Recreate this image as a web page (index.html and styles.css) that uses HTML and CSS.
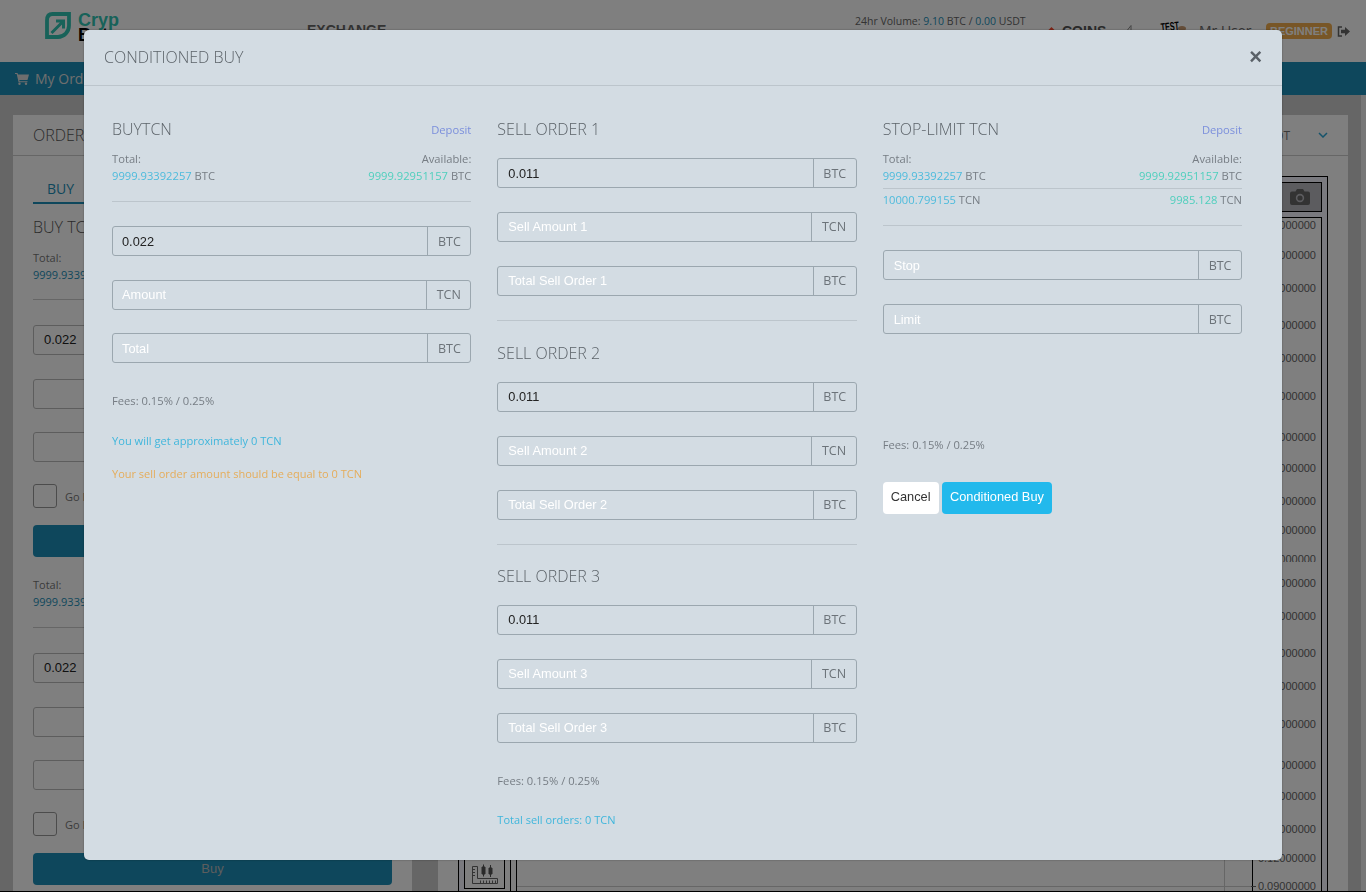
FILE: index.html
```html
<!DOCTYPE html>
<html lang="en">
<head>
<meta charset="utf-8">
<title>Conditioned Buy</title>
<link rel="stylesheet" href="styles.css">
</head>
<body>
<div class="page">
  <header class="top">
    <div class="brand">
      <svg class="logo" width="26" height="27" viewBox="0 0 26 27"><path d="M7.500 2H24v11.600c0 6.400-5 11.200-11 11.400H2V8.500C2 4.500 4 2 7.500 2z" fill="none" stroke="#30c4b3" stroke-width="3.800"/><path d="M6.500 21L17 10.500M11 9h7.500v7.500" fill="none" stroke="#30c4b3" stroke-width="3"/></svg>
      <div class="brand-text"><span class="brand-a">Cryp</span><span class="brand-b">Bot</span></div>
    </div>
    <div class="exchange">EXCHANGE</div>
    <div class="volume">24hr Volume: <b>9.10</b> BTC / <b>0.00</b> USDT</div>
    <div class="coin-dot"></div>
    <div class="coins">COINS</div>
    <svg class="pencil" width="8" height="10" viewBox="0 0 8 10"><path d="M6 .5L1 7h6M6 .5V10" fill="none" stroke="#888" stroke-width="1"/></svg>
    <div class="test">TEST</div>
    <span class="avatar"></span>
    <div class="user">Mr User</div>
    <div class="badge">BEGINNER</div>
    <svg class="signout" width="13" height="11" viewBox="0 0 13 11"><path d="M5 1H1.500v9H5" fill="none" stroke="#666" stroke-width="1.500"/><path d="M4 3.800h4V1l5 4.500L8 10V7.200H4z" fill="#666"/></svg>
  </header>
  <nav class="bar">
    <svg class="cart" width="14" height="13" viewBox="0 0 14 13"><path d="M0 1h2.500l.5 1.500H14l-1.500 5.500H4.300l.3 1.200H12.500v1H3.600L1.700 2H0z" fill="#ddd"/><circle cx="4.500" cy="11.800" r="1.200" fill="#ddd"/><circle cx="11" cy="11.800" r="1.200" fill="#ddd"/></svg>
    <span>My Orders</span>
  </nav>
  <main class="main">
    <section class="orders">
      <h2 class="card-title">ORDERS</h2>
      <div class="orders-body">
        <div class="tab">BUY</div>
        <h3 class="orders-h">BUY TCN</h3>
        <div class="form-block">
          <div class="small">Total:</div>
          <div class="small val-dim">9999.93392257</div>
          <div class="sep"></div>
          <div class="back-input first">0.022</div>
          <div class="back-input"></div>
          <div class="back-input"></div>
          <div class="check-row"><span class="check"></span><span class="go">Go Market</span></div>
          <div class="back-btn">Buy</div>
        </div>
        <div class="form-block">
          <div class="small">Total:</div>
          <div class="small val-dim">9999.93392257</div>
          <div class="sep"></div>
          <div class="back-input first">0.022</div>
          <div class="back-input"></div>
          <div class="back-input"></div>
          <div class="check-row"><span class="check"></span><span class="go">Go Market</span></div>
          <div class="back-btn">Buy</div>
        </div>
      </div>
    </section>
    <section class="chart-card">
      <div class="chart-head"><span class="pair">TCN / USDT</span><svg class="chev" width="10" height="6" viewBox="0 0 10 6"><path d="M1 1l4 4 4-4" fill="none" stroke="#2aa7d6" stroke-width="1.500"/></svg></div>
      <div class="chart-frame">
        <div class="chart-top"><div class="cam"><svg width="20" height="16" viewBox="0 0 20 16"><path d="M7 0h6l1.500 2.500H18a2 2 0 0 1 2 2V14a2 2 0 0 1-2 2H2a2 2 0 0 1-2-2V4.500a2 2 0 0 1 2-2h3.500z" fill="#666"/><circle cx="10" cy="9" r="4.200" fill="#b8b8be"/><circle cx="10" cy="9" r="2.600" fill="#666"/></svg></div></div>
        <div class="chart-row">
          <div class="tools">
            <svg class="tool" width="26" height="20" viewBox="0 0 26 20"><path d="M.5 2.500h5v12h20v5H.5zM.5 5.500h2.500M.5 8.500h2.500M.5 11.500h2.500M8.500 19v-2.500M11.500 19v-2.500M14.500 19v-2.500M17.500 19v-2.500M20.500 19v-2.500M23.500 19v-2.500" fill="none" stroke="#666"/><path d="M10 3h3v7h-3zM17 4h3v6h-3zM11.500 .5v12M18.500 1v12" stroke="#555" fill="#555" stroke-width="1"/></svg>
          </div>
          <div class="strip"></div>
          <div class="plot">
            <div class="grid-v"></div>
            <div class="grid-h"></div>
            <div class="axis">
              <span class="tick" style="top:0px">1.20000000</span>
              <span class="tick" style="top:30px">1.10000000</span>
              <span class="tick" style="top:63px">1.00000000</span>
              <span class="tick" style="top:100px">0.90000000</span>
              <span class="tick" style="top:133px">0.85000000</span>
              <span class="tick" style="top:171px">0.80000000</span>
              <span class="tick" style="top:212px">0.70000000</span>
              <span class="tick" style="top:243px">0.65000000</span>
              <span class="tick" style="top:276px">0.60000000</span>
              <span class="tick" style="top:305px">0.55000000</span>
              <span class="tick clipped" style="top:334px">0.52000000</span>
              <span class="tick" style="top:358px">0.50000000</span>
              <span class="tick" style="top:391px">0.45000000</span>
              <span class="tick" style="top:428px">0.40000000</span>
              <span class="tick" style="top:461px">0.36000000</span>
              <span class="tick" style="top:499px">0.32000000</span>
              <span class="tick" style="top:540px">0.28000000</span>
              <span class="tick" style="top:571px">0.24000000</span>
              <span class="tick" style="top:604px">0.20000000</span>
              <span class="tick" style="top:633px">0.12000000</span>
              <span class="tick" style="top:661px">0.09000000</span>
            </div>
          </div>
        </div>
      </div>
    </section>
    <div class="rail"></div>
    <div class="scroll"></div>
  </main>
  <div class="page-end"></div>
</div>

<div class="backdrop"></div>

<div class="modal">
  <div class="modal-head">
    <h1 class="modal-title">CONDITIONED BUY</h1>
    <span class="close">&times;</span>
  </div>
  <div class="modal-body">
    <div class="col col-buy">
      <div class="col-head"><h4 class="h">BUYTCN</h4><a class="deposit">Deposit</a></div>
      <div class="bal first-bal">
        <div><div>Total:</div><div><span class="v-blue">9999.93392257</span> BTC</div></div>
        <div class="right"><div>Available:</div><div><span class="v-green">9999.92951157</span> BTC</div></div>
      </div>
      <div class="rule rule-a"></div>
      <div class="ig after-rule"><input value="0.022"><span class="addon">BTC</span></div>
      <div class="ig"><input placeholder="Amount"><span class="addon">TCN</span></div>
      <div class="ig"><input placeholder="Total"><span class="addon">BTC</span></div>
      <p class="note fees-a">Fees: 0.15% / 0.25%</p>
      <p class="note info get">You will get approximately 0 TCN</p>
      <p class="note warn">Your sell order amount should be equal to 0 TCN</p>
    </div>

    <div class="col">
      <h4 class="h">SELL ORDER 1</h4>
      <div class="ig head-next"><input value="0.011"><span class="addon">BTC</span></div>
      <div class="ig"><input placeholder="Sell Amount 1"><span class="addon">TCN</span></div>
      <div class="ig"><input placeholder="Total Sell Order 1"><span class="addon">BTC</span></div>
      <div class="rule rule-b"></div>
      <h4 class="h">SELL ORDER 2</h4>
      <div class="ig head-next"><input value="0.011"><span class="addon">BTC</span></div>
      <div class="ig"><input placeholder="Sell Amount 2"><span class="addon">TCN</span></div>
      <div class="ig"><input placeholder="Total Sell Order 2"><span class="addon">BTC</span></div>
      <div class="rule rule-b rule-last"></div>
      <h4 class="h">SELL ORDER 3</h4>
      <div class="ig head-next"><input value="0.011"><span class="addon">BTC</span></div>
      <div class="ig"><input placeholder="Sell Amount 3"><span class="addon">TCN</span></div>
      <div class="ig"><input placeholder="Total Sell Order 3"><span class="addon">BTC</span></div>
      <p class="note fees-b">Fees: 0.15% / 0.25%</p>
      <p class="note info sum">Total sell orders: 0 TCN</p>
    </div>

    <div class="col col-stop">
      <div class="col-head"><h4 class="h">STOP-LIMIT TCN</h4><a class="deposit">Deposit</a></div>
      <div class="bal first-bal">
        <div><div>Total:</div><div><span class="v-blue">9999.93392257</span> BTC</div></div>
        <div class="right"><div>Available:</div><div><span class="v-green">9999.92951157</span> BTC</div></div>
      </div>
      <div class="bal second-bal">
        <div><span class="v-blue">10000.799155</span> TCN</div>
        <div class="right"><span class="v-green">9985.128</span> TCN</div>
      </div>
      <div class="rule rule-c"></div>
      <div class="ig after-rule"><input placeholder="Stop"><span class="addon">BTC</span></div>
      <div class="ig"><input placeholder="Limit"><span class="addon">BTC</span></div>
      <p class="note fees-c">Fees: 0.15% / 0.25%</p>
      <div class="actions"><button class="btn btn-cancel">Cancel</button><button class="btn btn-go">Conditioned Buy</button></div>
    </div>
  </div>
</div>
</body>
</html>
```
FILE: styles.css
```css
* { box-sizing: border-box; }
html, body { margin: 0; height: 892px; overflow: hidden; }
body { font-family: "Open Sans", "Noto Sans", sans-serif; color: #666; background: #fff; }

/* underlying page */
.page { height: 892px; display: flex; flex-direction: column; overflow: hidden; }
.top { height: 62px; flex: none; background: #fff; display: flex; align-items: flex-start; position: relative; }
.brand { display: flex; margin: 12px 0 0 45px; width: 262px; }
.logo { flex: none; }
.brand-text { margin-left: 7px; display: flex; flex-direction: column; font-family: "Liberation Sans", sans-serif; font-size: 18px; line-height: 15px; font-weight: 700; margin-top: 1px; }
.brand-a { color: #30c4b3; }
.brand-b { color: #000; }
.exchange { font: 700 14px/18px "Liberation Sans", sans-serif; color: #666; margin-top: 21px; width: 548px; }
.volume { font-size: 10.500px; line-height: 14px; color: #666; margin-top: 14px; width: 194px; white-space: nowrap; }
.volume b { font-weight: 400; color: #1c8fb8; }
.coin-dot { width: 5px; height: 5px; background: #ff4a30; transform: rotate(45deg); margin: 28px 8px 0 0; }
.coins { font: 700 14px/18px "Liberation Sans", sans-serif; color: #555; margin-top: 22px; width: 63px; }
.pencil { margin-top: 25px; width: 8px; flex: none; margin-right: 27px; }
.test { font: 700 9px/10px "Liberation Sans", sans-serif; color: #000; margin-top: 21px; width: 18px; transform: rotate(-6deg) scale(.8, 1.35); transform-origin: left top; }
.avatar { width: 8px; height: 5px; flex: none; background: #c89a70; border-radius: 50%; margin: 26px 13px 0 0; }
.user { font-size: 14px; line-height: 18px; color: #666; margin-top: 22px; width: 67px; }
.badge { background: #f0ad4e; color: #fff; font: 700 11px/16px "Liberation Sans", sans-serif; height: 16px; width: 66px; text-align: center; border-radius: 4px; margin-top: 23px; }
.signout { margin: 26px 0 0 5px; }

.bar { height: 33px; flex: none; background: #1c8fb8; display: flex; align-items: center; padding-left: 15px; color: #ddd; font-size: 14px; }
.cart { margin-right: 6px; }

.main { flex: 1; min-height: 0; display: flex; background: #ccc; padding: 20px 0 0 13px; overflow: hidden; }
.orders { width: 399px; flex: none; background: #fff; margin-right: 26px; }
.card-title { margin: 0; height: 41px; padding: 10px 0 0 20px; font-weight: 300; font-size: 16px; line-height: 20px; color: #555; border-bottom: 1px solid #ccc; }
.orders-body { padding: 19px 20px 0; }
.tab { width: 55px; height: 29px; border-bottom: 2px solid #1c8fb8; text-align: center; font-size: 14px; line-height: 28px; color: #1c8fb8; }
.orders-h { margin: 13px 0 0; font-weight: 300; font-size: 16px; line-height: 20px; color: #555; white-space: nowrap; }
.form-block { margin-top: 12px; }
.form-block + .form-block { margin-top: 19px; }
.form-block + .form-block .sep { margin-top: 17px; }
.small { font-size: 11px; line-height: 17px; color: #777; }
.val-dim { color: #1c8fb8; }
.sep { height: 1px; background: #ccc; margin-top: 16px; }
.back-input { height: 30px; margin-top: 23.500px; border: 1px solid #bbb; border-radius: 3px; padding-left: 10px; font: 13px/28px "Liberation Sans", sans-serif; color: #222; background: #fff; }
.back-input.first { margin-top: 25px; }
.check-row { display: flex; align-items: center; margin-top: 22px; height: 24px; }
.check { width: 24px; height: 24px; border: 1px solid #999; border-radius: 3px; }
.go { margin-left: 8px; font-size: 11px; color: #777; }
.back-btn { height: 32px; margin-top: 17px; border-radius: 4px; background: #1c8fb8; color: #bbb; text-align: center; font: 13px/32px "Liberation Sans", sans-serif; }

.chart-card { width: 910px; flex: none; background: #fff; display: flex; flex-direction: column; }
.chart-head { height: 41px; flex: none; border-bottom: 1px solid #ccc; display: flex; align-items: center; justify-content: flex-end; padding-right: 20px; font-size: 12px; color: #777; }
.pair { margin-right: 28px; }
.chart-frame { margin: 20px 20px 0; flex: 1; min-height: 0; border: 1px solid #000; border-bottom: 0; background: #f4f4ff; padding: 5px 5px 0; display: flex; flex-direction: column; }
.chart-top { height: 35px; flex: none; display: flex; justify-content: flex-end; }
.cam { width: 44px; height: 30px; border: 1px solid #000; background: #b8b8be; display: flex; align-items: center; justify-content: center; }
.cam svg { display: block; }
.chart-row { flex: 1; min-height: 0; display: flex; background: #fff; }
.tools { width: 41px; flex: none; border: 1px solid #000; margin-bottom: 2px; display: flex; align-items: flex-end; justify-content: center; padding-bottom: 4px; }
.strip { width: 6px; margin-left: 5px; flex: none; border-left: 1px solid #000; }
.plot { flex: 1; position: relative; border-left: 1px solid #000; }
.grid-v { position: absolute; left: 707px; top: 0; bottom: 0; width: 1px; background: #ccc; }
.grid-h { position: absolute; left: 0; right: 70px; bottom: 4px; height: 1px; background: #ccc; }
.axis { position: absolute; left: 735px; right: 0; top: 0; bottom: 0; border: 1px solid #000; border-bottom: 0; background: #fff; }
.tick { position: absolute; right: 5px; font: 11px/14px "Liberation Sans", sans-serif; color: #666; white-space: nowrap; }
.tick::before { content: ""; position: absolute; right: 100%; top: 7px; width: 5px; height: 1px; margin-right: 2px; background: #666; }
.tick.clipped { height: 10px; overflow: hidden; }

.rail { width: 13px; flex: none; }
.scroll { width: 5px; flex: none; background: #eee; margin-top: -20px; }
.page-end { height: 1px; flex: none; background: #000; }

/* overlay */
.backdrop { position: fixed; inset: 0; background: rgba(0, 0, 0, .5); }
.modal { position: fixed; left: 84px; top: 30px; width: 1198px; height: 830px; background: #d3dce3; border-radius: 5px; box-shadow: 0 0 2px rgba(0, 0, 0, .4); }
.modal-head { height: 56px; border-bottom: 1px solid #bcc5cc; display: flex; align-items: center; justify-content: space-between; padding: 0 20px 2px; }
.modal-title { margin: 0; font-weight: 300; font-size: 16px; color: #5c6369; }
.close { font: 700 22px/22px "Liberation Sans", sans-serif; color: #5a6168; }
.modal-body { display: grid; grid-template-columns: repeat(3, 1fr); column-gap: 26px; padding: 33px 40px 0 28px; }
.col { min-width: 0; }
.col-head { display: flex; justify-content: space-between; align-items: center; }
.h { margin: 0; font-weight: 300; font-size: 16px; line-height: 20px; color: #5c6369; }
.deposit { font-size: 11.200px; color: #7b8fdc; }
.bal { display: flex; justify-content: space-between; font-size: 11.200px; line-height: 17px; color: #767d84; }
.first-bal { margin-top: 11px; }
.second-bal { margin-top: 4px; padding-top: 2px; border-top: 1px solid #bcc5cc; }
.right { text-align: right; }
.v-blue { color: #4dbbdc; }
.v-green { color: #4fcfbd; }
.rule { height: 1px; background: #bcc5cc; }
.rule-a { margin-top: 17px; }
.rule-b { margin: 24px 0 22px; }
.rule-b.rule-last { margin-bottom: 21.400px; }
.rule-c { margin-top: 17px; }
.ig { display: flex; height: 30px; margin-top: 23.900px; border: 1px solid #9ba7af; border-radius: 3px; }
.col-buy .ig { margin-top: 23.700px; }
.col-stop .ig { margin-top: 24px; }
.col-buy .ig.after-rule, .ig.after-rule { margin-top: 24px; }
.ig.head-next { margin-top: 19px; }
.ig input { flex: 1; min-width: 0; height: 100%; border: 0; background: transparent; padding: 0 10px; font: 12.800px "Liberation Sans", sans-serif; color: #222; outline: none; }
.col-buy .ig input { padding-left: 9px; }
.ig input::placeholder { color: #fff; opacity: 1; }
.addon { flex: none; display: flex; align-items: center; padding: 0 9.500px; border-left: 1px solid #9ba7af; font-size: 12.500px; color: #6c7379; }
.note { margin: 0; font-size: 11.200px; line-height: 17px; color: #767d84; }
.fees-a { margin-top: 28.800px; }
.fees-b { margin-top: 29.500px; }
.fees-c { margin-top: 101.900px; }
.get { margin-top: 23px; font-size: 11.100px; }
.sum { margin-top: 21.500px; font-size: 11px; }
.info { color: #3fb6dc; }
.warn { margin-top: 16px; font-size: 11px; color: #e5ad5b; }
.actions { margin-top: 29px; display: flex; gap: 3px; }
.btn { height: 32px; border: 0; border-radius: 4px; font: 12.800px "Liberation Sans", sans-serif; padding: 0 8px 2px; }
.btn-cancel { background: #fff; color: #333; }
.btn-go { background: #22b9ec; color: #fff; padding: 0 8.500px 2px; }
```
